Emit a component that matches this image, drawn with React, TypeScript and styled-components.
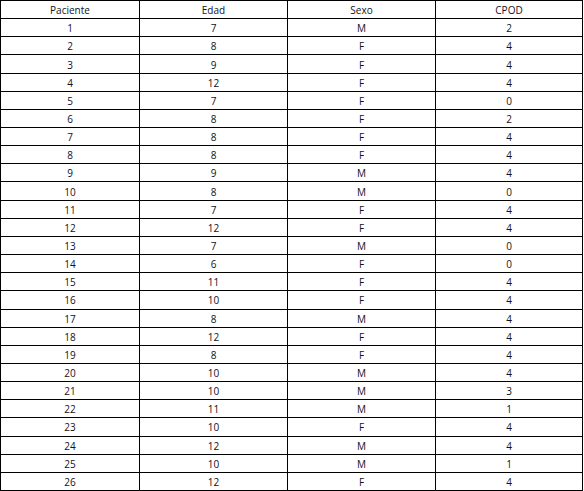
import React from 'react';
import styled, { createGlobalStyle } from 'styled-components';

const GlobalStyles = createGlobalStyle`
  html, body {
    margin: 0;
    padding: 0;
    background: #ffffff;
  }
`;

const Sheet = styled.div`
  display: grid;
  grid-template-columns: 138px 147px 147px 146px;
  grid-template-rows: repeat(27, 1fr);
  gap: 1px;
  padding: 1px;
  width: 583px;
  height: 491px;
  box-sizing: border-box;
  background: #000000;
  font-family: 'Open Sans', 'Liberation Sans', sans-serif;
  font-size: 10px;
  color: #111122;
`;

const Cell = styled.div`
  background: #ffffff;
  display: flex;
  align-items: center;
  justify-content: center;
  line-height: 1;
  padding-top: 1px;
`;

const headers = ['Paciente', 'Edad', 'Sexo', 'CPOD'];

const rows: [number, number, string, number][] = [
  [1, 7, 'M', 2],
  [2, 8, 'F', 4],
  [3, 9, 'F', 4],
  [4, 12, 'F', 4],
  [5, 7, 'F', 0],
  [6, 8, 'F', 2],
  [7, 8, 'F', 4],
  [8, 8, 'F', 4],
  [9, 9, 'M', 4],
  [10, 8, 'M', 0],
  [11, 7, 'F', 4],
  [12, 12, 'F', 4],
  [13, 7, 'M', 0],
  [14, 6, 'F', 0],
  [15, 11, 'F', 4],
  [16, 10, 'F', 4],
  [17, 8, 'M', 4],
  [18, 12, 'F', 4],
  [19, 8, 'F', 4],
  [20, 10, 'M', 4],
  [21, 10, 'M', 3],
  [22, 11, 'M', 1],
  [23, 10, 'F', 4],
  [24, 12, 'M', 4],
  [25, 10, 'M', 1],
  [26, 12, 'F', 4],
];

export default function App() {
  return (
    <>
      <GlobalStyles />
      <Sheet>
        {headers.map((h) => (
          <Cell key={h}>{h}</Cell>
        ))}
        {rows.map((r) =>
          r.map((v, i) => <Cell key={`${r[0]}-${i}`}>{v}</Cell>)
        )}
      </Sheet>
    </>
  );
}
